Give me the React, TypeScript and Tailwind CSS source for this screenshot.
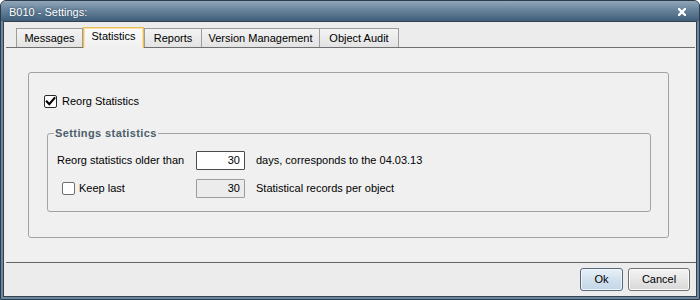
import React from "react";

const F = "font-['Liberation_Sans',Arial,sans-serif]";

function Tab({ label, w, selected, overlap }: { label: string; w: string; selected?: boolean; overlap?: boolean }) {
  if (selected) {
    return (
      <div
        className={`relative z-10 ${w} h-[21px] -mb-px border border-b-0 border-[#ecbc58] bg-[linear-gradient(to_bottom,#fbfbfb,#f0f0f0)] shadow-[inset_1px_1px_0_#fae3a8,inset_-1px_0_0_#fae3a8] flex items-center justify-center pb-[3px] text-[11px] text-black`}
      >
        {label}
      </div>
    );
  }
  return (
    <div
      className={`${w} h-[19px] ${overlap ? "-ml-px" : ""} border border-b-0 border-[#9d9d9d] bg-[linear-gradient(to_bottom,#f3f3f3,#e3e3e3)] flex items-center justify-center pt-[1px] text-[11px] text-black`}
    >
      {label}
    </div>
  );
}

function CheckBox({ checked }: { checked?: boolean }) {
  return (
    <div
      className={`w-[13px] h-[13px] rounded-[2px] border bg-white flex items-center justify-center ${
        checked ? "border-[#2a2a2a]" : "border-[#6f6f6f]"
      }`}
    >
      {checked && (
        <svg width="11" height="11" viewBox="0 0 11 11">
          <path d="M1.8 5.6 L4.3 8.2 L9.4 2.2" fill="none" stroke="#000" strokeWidth="2.1" strokeLinecap="square" />
        </svg>
      )}
    </div>
  );
}

export default function App() {
  return (
    <div className={`${F} w-[700px] h-[300px] bg-white`}>
      <div className="w-[700px] h-[300px] flex flex-col border border-[#2c3c4a] rounded-t-[6px] bg-[#6b879f] overflow-hidden">
        {/* title bar */}
        <div className="h-[20px] shrink-0 flex items-center justify-between pl-[8px] pr-[13px] bg-[linear-gradient(to_bottom,#91a7b9,#6b879f_40%,#3f5e7a)]">
          <span className="text-[11px] text-white pt-[2px] [text-shadow:0_0_2px_#2a3f52]">B010 - Settings:</span>
          <svg width="8" height="8" viewBox="0 0 8 8" className="mt-[2px]">
            <path d="M1 1 L7 7 M7 1 L1 7" stroke="#ffffff" strokeWidth="2.3" strokeLinecap="square" />
          </svg>
        </div>
        {/* body */}
        <div className="flex-1 mx-[2px] mb-[2px] border border-[#34414d] bg-[#ececec] flex flex-col">
          {/* tabs */}
          <div className="mt-[5px] h-[20px] pl-[12px] flex items-end">
            <Tab label="Messages" w="w-[67px]" />
            <Tab label="Statistics" w="w-[61px]" selected />
            <Tab label="Reports" w="w-[58px]" />
            <Tab label="Version Management" w="w-[119px]" overlap />
            <Tab label="Object Audit" w="w-[80px]" overlap />
          </div>
          {/* panel */}
          <div className="ml-[2px] mr-[1px] h-[214px] border-t border-[#707070] bg-[#f0f0f0] pt-[24px] pl-[22px]">
            <div className="w-[641px] h-[166px] rounded-[3px] border border-[#a3a3a3] pt-[21px]">
              <div className="flex items-center pl-[15px] h-[15px]">
                <CheckBox checked />
                <span className="ml-[5px] text-[11px] text-black">Reorg Statistics</span>
              </div>
              <fieldset className="mt-[17px] ml-[18px] w-[604px] rounded-[3px] border border-[#a3a3a3] px-0 pb-[13px]">
                <legend className="ml-[6px] px-[1px] text-[11px] leading-[14px] font-bold tracking-[0.4px] text-[#4c5d6a]">
                  Settings statistics
                </legend>
                <div className="mt-[11px] pl-[9px] flex items-center h-[19px]">
                  <span className="w-[139px] text-[11px] text-black">Reorg statistics older than</span>
                  <div className="w-[49px] h-[19px] border border-[#4a4a4a] rounded-[1px] bg-white flex items-center justify-end pr-[4px] text-[11px] text-black">
                    30
                  </div>
                  <span className="ml-[11px] text-[11px] text-black">days, corresponds to the 04.03.13</span>
                </div>
                <div className="mt-[9px] pl-[9px] flex items-center h-[19px]">
                  <div className="w-[139px] flex items-center pl-[5px]">
                    <CheckBox />
                    <span className="ml-[4px] text-[11px] text-black">Keep last</span>
                  </div>
                  <div className="w-[49px] h-[19px] border border-[#9c9c9c] rounded-[1px] bg-[#ececec] flex items-center justify-end pr-[4px] text-[11px] text-black">
                    30
                  </div>
                  <span className="ml-[11px] text-[11px] text-black">Statistical records per object</span>
                </div>
              </fieldset>
            </div>
          </div>
          {/* separator */}
          <div className="mt-[1px] ml-[2px] border-t border-[#666666]" />
          {/* footer */}
          <div className="flex justify-end gap-[5px] pt-[5px] pr-[6px]">
            <button className="w-[43px] h-[23px] rounded-[3px] border border-[#55697c] bg-[linear-gradient(to_bottom,#e9f1f8,#d3e1ee_50%,#c3d5e6)] text-[11px] text-black shadow-[inset_0_0_0_1px_#eef5fb]">
              Ok
            </button>
            <button className="w-[62px] h-[23px] rounded-[3px] border border-[#707070] bg-[linear-gradient(to_bottom,#f4f4f4,#e6e6e6_50%,#d8d8d8)] text-[11px] text-black shadow-[inset_0_0_0_1px_#fbfbfb]">
              Cancel
            </button>
          </div>
        </div>
      </div>
    </div>
  );
}
